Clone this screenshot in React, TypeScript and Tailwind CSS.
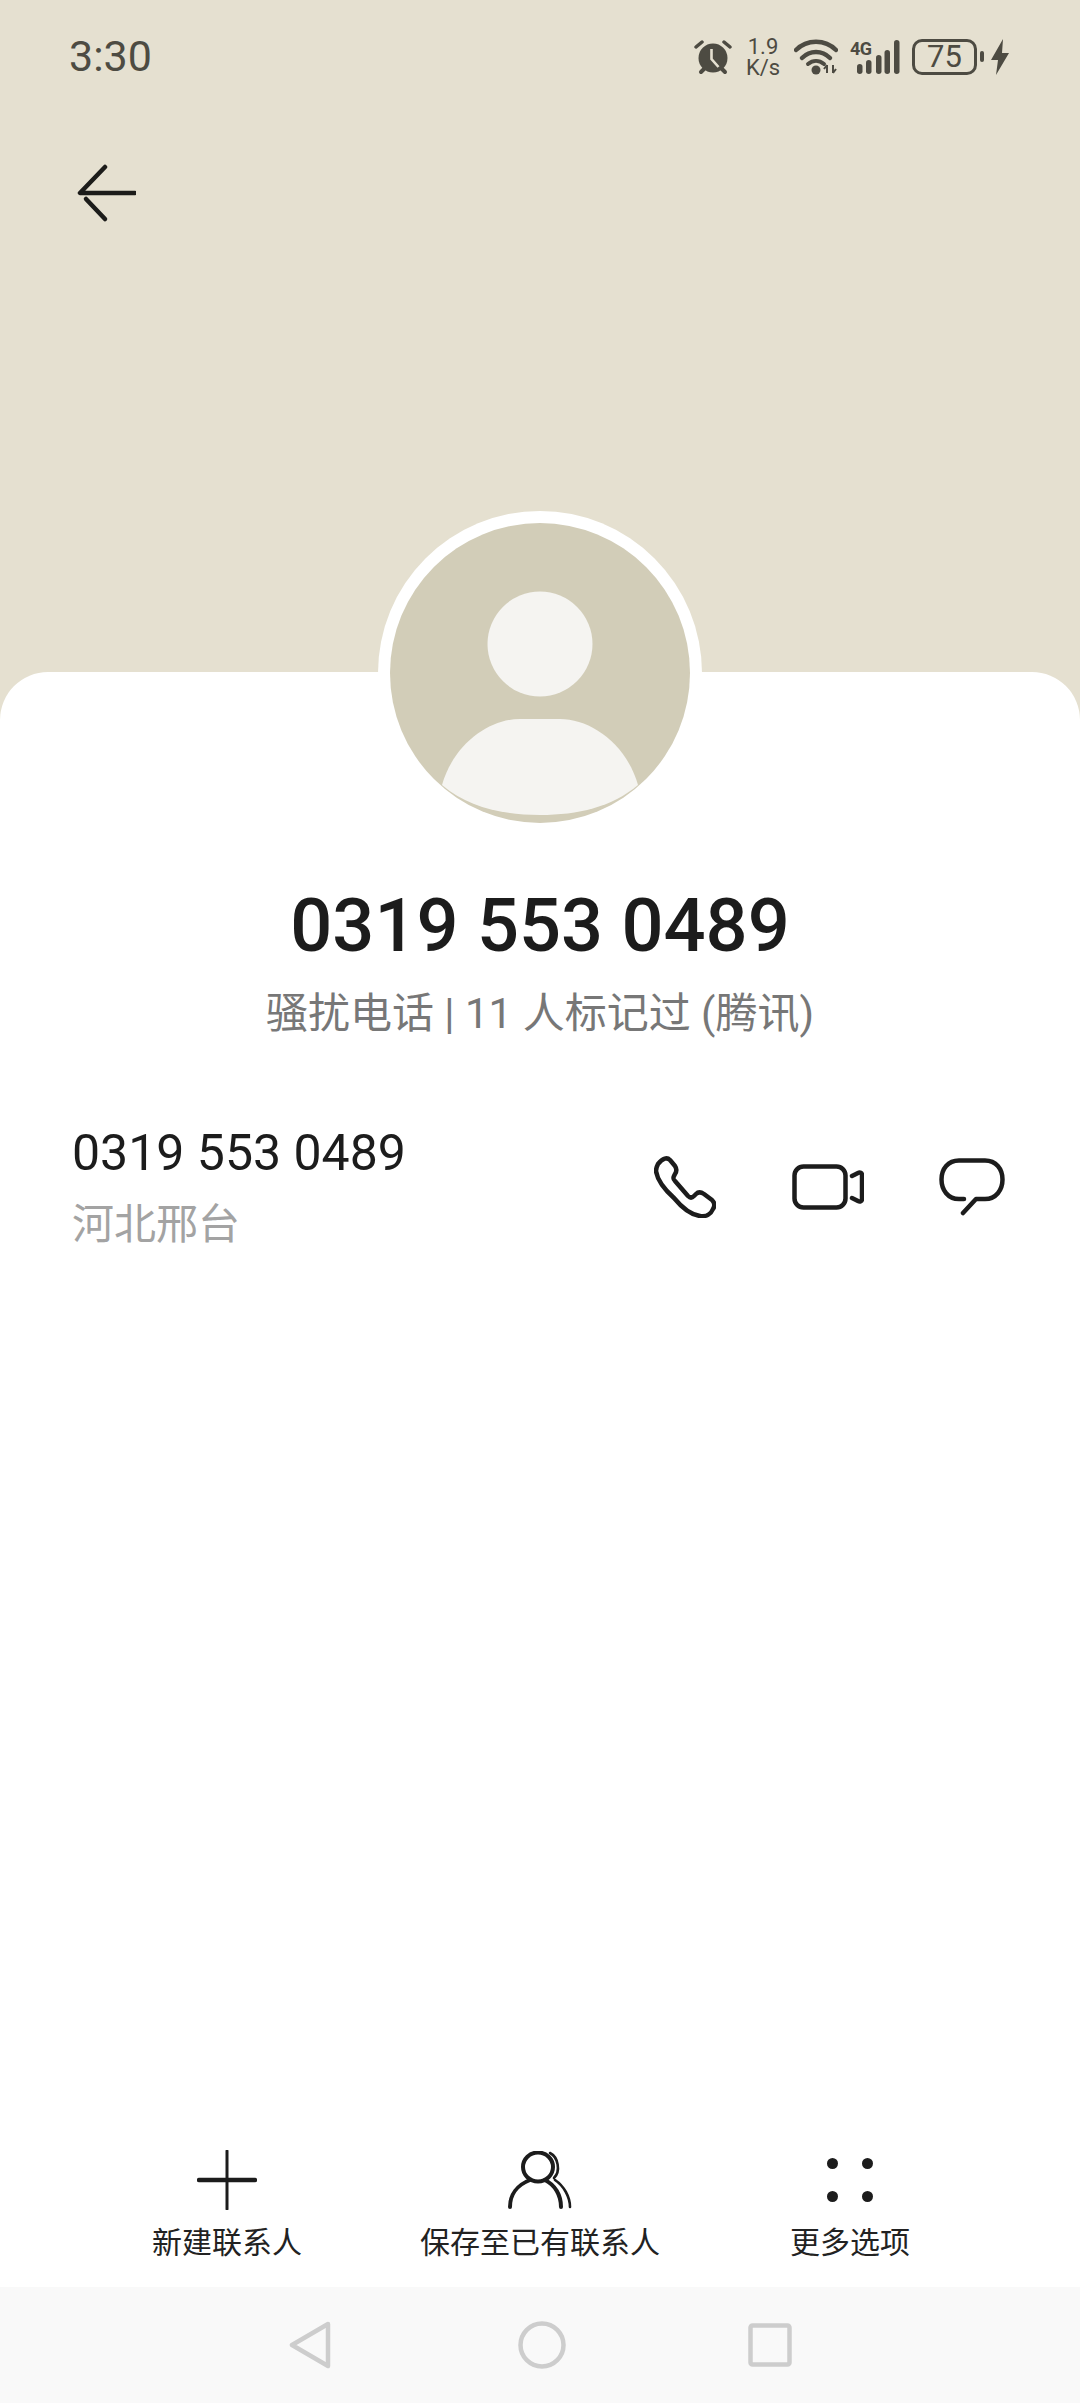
const cjk = "font-['Roboto','Noto_Sans_CJK_SC',sans-serif]";

function Back() {
  return (
    <svg width="64" height="60" viewBox="0 0 64 60" fill="none" stroke="#1c1c1a" strokeWidth="4.5" strokeLinecap="round" strokeLinejoin="round">
      <path d="M33 3 8 29h55" />
      <path d="M14 35l19 20" />
    </svg>
  );
}

function StatusIcons() {
  const c = "#4d4b42";
  return (
    <div className="flex items-center">
      <svg width="38" height="36" viewBox="0 0 38 36" fill="none">
        <path d="M2 8l6-5M36 8l-6-5" stroke={c} strokeWidth="3.5" strokeLinecap="round" />
        <path d="M7 33l4-4M31 33l-4-4" stroke={c} strokeWidth="4" strokeLinecap="round" />
        <circle cx="19" cy="19" r="14.5" fill={c} />
        <path d="M17.5 10v10l7 8" stroke="#e5e0d0" strokeWidth="2.6" fill="none" />
      </svg>
      <div className="ml-[13px] flex w-[36px] flex-col items-center font-['Roboto',sans-serif] text-[22px] leading-[21px] text-[#4d4b42]">
        <span>1.9</span>
        <span>K/s</span>
      </div>
      <svg className="ml-[13px]" width="44" height="36" viewBox="0 0 44 36" fill="none">
        <path d="M2 11C13 0 31 0 42 11" stroke={c} strokeWidth="4.5" strokeLinecap="round" />
        <path d="M8 19c8-8 20-8 28 0" stroke={c} strokeWidth="4.5" strokeLinecap="round" />
        <path d="M14 25c5-4 11-4 16 0" stroke={c} strokeWidth="4" strokeLinecap="round" />
        <circle cx="22" cy="31" r="4.5" fill={c} />
        <path d="M33 26v8M33 26l-3 4M39 34v-8M39 34l3-4" stroke={c} strokeWidth="2" />
      </svg>
      <div className="relative ml-[11px] h-[36px] w-[51px]">
        <span className="absolute left-[1px] top-[1px] font-['Roboto',sans-serif] text-[18px] font-bold leading-[18px] tracking-[-0.5px] text-[#4d4b42]">4G</span>
        <svg className="absolute left-0 top-0" width="51" height="36" viewBox="0 0 51 36" fill={c}>
          <rect x="8" y="25" width="5.5" height="10" rx="2.75" />
          <rect x="17" y="21" width="5.5" height="14" rx="2.75" />
          <rect x="27" y="16" width="5.5" height="19" rx="2.75" />
          <rect x="35.5" y="11" width="5.5" height="24" rx="2.75" />
          <rect x="45" y="1" width="5.5" height="34" rx="2.75" />
        </svg>
      </div>
      <div className="ml-[12px] flex h-[36px] w-[65px] items-center justify-center rounded-[10px] border-[3px] border-[#4d4b42] font-['Roboto',sans-serif] text-[31px] leading-none text-[#4d4b42]">
        75
      </div>
      <div className="ml-[3px] h-[11px] w-[4px] rounded-[2px] bg-[#4d4b42]" />
      <svg className="ml-[7px]" width="18" height="36" viewBox="0 0 18 36" fill={c}>
        <path d="M12 0 0 21h7l-2 15L18 14h-7z" />
      </svg>
    </div>
  );
}

function Avatar() {
  return (
    <div className="absolute left-[378px] top-[-161px] h-[324px] w-[324px] rounded-full bg-white p-[12px]">
      <svg width="300" height="300" viewBox="0 0 300 300">
        <circle cx="150" cy="150" r="150" fill="#d2cdb8" />
        <circle cx="150" cy="121" r="52.5" fill="#f5f4f1" />
        <path d="M52 262C64 220 100 196 130 196h40c30 0 66 24 78 66-26 22-60 30-98 30s-72-8-98-30z" fill="#f5f4f1" />
      </svg>
    </div>
  );
}

function Phone() {
  return (
    <svg width="62" height="62" viewBox="0 0 62 62" fill="none" stroke="#1c1c1c" strokeWidth="4.5" strokeLinejoin="round" strokeLinecap="round">
      <path d="M4 8C9 2 13 1 16 4l5 6c2 3 2 5 0 8l-1 2c-1 2-1 3 1 5l13 15c2 2 4 2 6 0l2-2c2-2 5-2 8 0l8 6c3 3 3 6 1 9-2 5-7 8-13 7-7-1-17-7-26-18C9 32 3 22 2 15c0-3 1-5 2-7z" />
    </svg>
  );
}

function Video() {
  return (
    <svg width="72" height="46" viewBox="0 0 72 46" fill="none" stroke="#1c1c1c" strokeWidth="4.5" strokeLinejoin="round" strokeLinecap="round">
      <rect x="2.5" y="2.5" width="51" height="41" rx="9" />
      <path d="M60 12l6-3c2-1 4 0 4 2v24c0 2-2 3-4 2l-6-3" />
    </svg>
  );
}

function Bubble() {
  return (
    <svg width="66" height="58" viewBox="0 0 66 58" fill="none" stroke="#1c1c1c" strokeWidth="4.5" strokeLinejoin="round" strokeLinecap="round">
      <path d="M25 41h-5C9 41 2.5 32 2.5 21.5S9 2.5 20 2.5h26c11 0 17.5 8.5 17.5 19S57 41 46 41H37L24 55" />
    </svg>
  );
}

function Plus() {
  return (
    <svg width="60" height="60" viewBox="0 0 60 60" fill="none" stroke="#1c1c1c" strokeLinecap="round">
      <path d="M30 1v58" strokeWidth="3" />
      <path d="M2 30h56" strokeWidth="4.5" />
    </svg>
  );
}

function People() {
  return (
    <svg width="64" height="58" viewBox="0 0 64 58" fill="none" stroke="#1c1c1c" strokeLinecap="round">
      <ellipse cx="30" cy="16" rx="15" ry="14.5" strokeWidth="4" />
      <path d="M2 56C2 44 9 34 22 29M53 56C53 44 47 34 37 29" strokeWidth="4" />
      <path d="M42 2C50 6 53 20 46 27M47 29C56 35 62 46 62 56" strokeWidth="2.6" />
    </svg>
  );
}

function Dots() {
  return (
    <svg width="46" height="44" viewBox="0 0 46 44" fill="#1c1c1c">
      <circle cx="5.5" cy="5.5" r="5.5" />
      <circle cx="40.5" cy="5.5" r="5.5" />
      <circle cx="5.5" cy="38.5" r="5.5" />
      <circle cx="40.5" cy="38.5" r="5.5" />
    </svg>
  );
}

function Action({ icon, label, className }: { icon: React.ReactNode; label: string; className: string }) {
  return (
    <div className={`flex flex-col items-center ${className}`}>
      <div className="flex h-[60px] items-center justify-center">{icon}</div>
      <span className="mt-[13px] whitespace-nowrap text-[30px] leading-[40px] text-[#222]">{label}</span>
    </div>
  );
}

export default function App() {
  return (
    <div className={`flex h-[2403px] w-[1080px] flex-col overflow-hidden bg-[#e5e0d0] ${cjk}`}>
      <header className="h-[672px] shrink-0">
        <div className="flex h-[113px] items-center justify-between pl-[69px] pr-[71px]">
          <span className="text-[43px] leading-none text-[#4d4b42]">3:30</span>
          <StatusIcons />
        </div>
        <div className="pl-[72px] pt-[51px]">
          <Back />
        </div>
      </header>

      <main className="relative flex flex-1 flex-col rounded-t-[48px] bg-white">
        <Avatar />
        <div className="flex flex-col items-center pt-[214px]">
          <h1 className="text-[74px] font-medium leading-[80px] text-[#1c1c1c]">0319 553 0489</h1>
          <p className="mt-[21px] text-[42px] leading-[54px] text-[#777777]">骚扰电话 | 11 人标记过 (腾讯)</p>
        </div>
        <div className="mt-[83px] flex items-start justify-between pl-[72px] pr-[75px]">
          <div className="flex flex-col">
            <span className="text-[50px] leading-[58px] text-[#1c1c1c]">0319 553 0489</span>
            <span className="mt-[15px] text-[42px] leading-[56px] text-[#a3a3a3]">河北邢台</span>
          </div>
          <div className="mt-[32px] flex items-center">
            <Phone />
            <div className="ml-[76px]"><Video /></div>
            <div className="ml-[75px]"><Bubble /></div>
          </div>
        </div>

        <div className="mt-auto flex h-[167px] items-start pt-[30px]">
          <Action icon={<Plus />} label="新建联系人" className="ml-[152px] w-[150px]" />
          <Action icon={<People />} label="保存至已有联系人" className="ml-[118px] w-[240px]" />
          <Action icon={<Dots />} label="更多选项" className="ml-[130px] w-[120px]" />
        </div>

        <nav className="flex h-[116px] items-center justify-center bg-[#f9f9f9]">
          <svg width="42" height="48" viewBox="0 0 42 48" fill="none" stroke="#cdcdcd" strokeWidth="4.5" strokeLinejoin="round">
            <path d="M39 3 3 24l36 21z" />
          </svg>
          <svg className="ml-[187px]" width="48" height="48" viewBox="0 0 48 48" fill="none" stroke="#cdcdcd" strokeWidth="4.5">
            <circle cx="24" cy="24" r="21.5" />
          </svg>
          <svg className="ml-[182px]" width="44" height="44" viewBox="0 0 44 44" fill="none" stroke="#cdcdcd" strokeWidth="4.5" strokeLinejoin="round">
            <rect x="2.5" y="2.5" width="39" height="39" rx="2" />
          </svg>
        </nav>
      </main>
    </div>
  );
}
